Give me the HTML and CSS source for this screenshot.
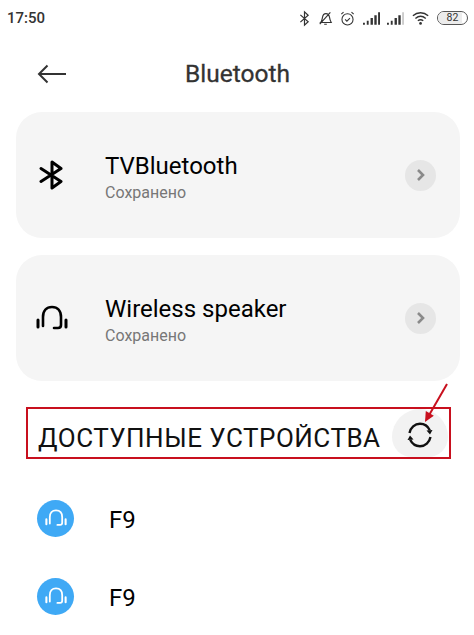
FILE: index.html
```html
<!DOCTYPE html>
<html lang="en">
<head>
    <meta charset="UTF-8">
    <meta name="viewport" content="width=device-width, initial-scale=1.0">
    <title>Bluetooth</title>
    <link rel="stylesheet" href="styles.css">
</head>
<body>
    <div class="screen">
        <div class="statusbar">
            <span class="time">17:50</span>
            <div class="status-icons">
                <svg width="11" height="17" viewBox="0 0 12 17"><path d="M1.500 4.500 10 12l-4 3.800V1.200L10 5 1.500 12.500" fill="none" stroke="#333" stroke-width="1.300"/></svg>
                <svg width="15" height="17" viewBox="0 0 17 17"><path d="M3 13c1.500-1.500 1.500-3 2-5.500C5.500 4.500 7.500 3 9 3c2 0 3.500 1.500 4 4 .3 2 .8 4 2 6zM7 15h3M2 15 14 1.500" fill="none" stroke="#333" stroke-width="1.300"/></svg>
                <svg width="15" height="17" viewBox="0 0 17 18"><circle cx="8.500" cy="10" r="6.300" fill="none" stroke="#333" stroke-width="1.200"/><path d="M5.800 10l2 2 3.500-3.500M1.500 4 4 1.800M15.500 4 13 1.800" fill="none" stroke="#333" stroke-width="1.200"/></svg>
                <svg class="signal" width="17" height="13" viewBox="0 0 18 13"><path d="M0 11h2v2H0zM4 9h2v4H4zM8 6h2.500v7H8zM12 3h2.500v10H12zM16 0h2v13h-2z" fill="#333"/></svg>
                <svg class="signal" width="17" height="13" viewBox="0 0 18 13"><path d="M0 11h2v2H0zM4 9h2v4H4zM8 6h2.500v7H8zM12 3h2.500v10H12z" fill="#333"/><path d="M16 0h2v13h-2z" fill="#ccc"/></svg>
                <svg width="18" height="16" viewBox="0 0 20 16"><path d="M1 5.500c5-4.500 12-4.500 17 0M3.800 8.500c3.500-3 8-3 11.500 0M6.500 11c2-1.500 4-1.500 6 0" fill="none" stroke="#333" stroke-width="1.500"/><circle cx="9.500" cy="14" r="1.500" fill="#333"/></svg>
                <div class="battery"><div class="battery-level"></div><span>82</span></div>
            </div>
        </div>

        <div class="header">
            <svg class="back" width="30" height="20" viewBox="0 0 30 20"><path d="M29 10H2M10.500 1.500 2 10l8.500 8.500" fill="none" stroke="#333" stroke-width="2"/></svg>
            <h1>Bluetooth</h1>
        </div>

        <div class="card">
            <svg class="card-icon" width="24" height="30" viewBox="0 0 26 30"><path d="M2 8.500 22 21.500 13 28V2l9 6.500L2 21.500" fill="none" stroke="#000" stroke-width="3" stroke-linejoin="round" stroke-linecap="round"/></svg>
            <div class="card-text">
                <div class="card-name">TVBluetooth</div>
                <div class="card-sub">Сохранено</div>
            </div>
            <div class="chevron"><svg width="10" height="14" viewBox="0 0 10 14"><path d="M2 2l5 5-5 5" fill="none" stroke="#8a8a8a" stroke-width="2.600"/></svg></div>
        </div>

        <div class="card">
            <svg class="card-icon" width="32" height="26" viewBox="0 0 32 26"><path d="M7 21V12C7 5.500 10.500 2 16 2s9 3.500 9 10v8c0 2-1 3-3 3h-4" fill="none" stroke="#000" stroke-width="2.600" stroke-linecap="round"/><path d="M2 15v7M30 15v7" stroke="#000" stroke-width="3" stroke-linecap="round"/></svg>
            <div class="card-text">
                <div class="card-name">Wireless speaker</div>
                <div class="card-sub">Сохранено</div>
            </div>
            <div class="chevron"><svg width="10" height="14" viewBox="0 0 10 14"><path d="M2 2l5 5-5 5" fill="none" stroke="#8a8a8a" stroke-width="2.600"/></svg></div>
        </div>

        <div class="section">
            <span class="section-title">ДОСТУПНЫЕ УСТРОЙСТВА</span>
            <div class="refresh">
                <svg width="26" height="26" viewBox="0 0 26 26"><path d="M2.500 11C3.500 5.800 7.800 1.800 13 1.800c4.500 0 8 2.600 9.800 6.400M23.500 15c-1 5.200-5.300 9.200-10.500 9.200-4.500 0-8-2.600-9.800-6.400" fill="none" stroke="#111" stroke-width="2.400"/><path d="M25.500 8 23 12.500 19.500 8.500zM.5 18 3 13.500 6.500 17.500z" fill="#111"/></svg>
            </div>
            <svg class="arrow" width="25" height="40" viewBox="0 0 25 40"><path d="M23 1 4 34" stroke="#c8101e" stroke-width="2" fill="none"/><path d="M1 39 1.800 28l8 4.700z" fill="#c8101e"/></svg>
        </div>

        <div class="device">
            <div class="device-icon"><svg width="22" height="18" viewBox="0 0 32 26"><path d="M7 21V12C7 5.500 10.500 2 16 2s9 3.500 9 10v8c0 2-1 3-3 3h-4" fill="none" stroke="#fff" stroke-width="2.600" stroke-linecap="round"/><path d="M2 15v7M30 15v7" stroke="#fff" stroke-width="3" stroke-linecap="round"/></svg></div>
            <span>F9</span>
        </div>
        <div class="device">
            <div class="device-icon"><svg width="22" height="18" viewBox="0 0 32 26"><path d="M7 21V12C7 5.500 10.500 2 16 2s9 3.500 9 10v8c0 2-1 3-3 3h-4" fill="none" stroke="#fff" stroke-width="2.600" stroke-linecap="round"/><path d="M2 15v7M30 15v7" stroke="#fff" stroke-width="3" stroke-linecap="round"/></svg></div>
            <span>F9</span>
        </div>
    </div>
</body>
</html>
```
FILE: styles.css
```css
body {
    margin: 0;
    background-color: #fff;
    font-family: Roboto, "Noto Sans", sans-serif;
    color: #000;
}
.screen {
    width: 474px;
    height: 635px;
    overflow: hidden;
}
.statusbar {
    display: flex;
    justify-content: space-between;
    align-items: center;
    height: 36px;
    padding: 0 6px 0 7px;
}
.time {
    font-size: 15px;
    font-weight: 500;
    color: #333;
}
.status-icons {
    display: flex;
    align-items: center;
    gap: 7.500px;
}
.signal {
    margin-top: 1px;
}
.battery {
    position: relative;
    width: 29px;
    height: 12px;
    border: 1px solid #555;
    border-radius: 7px;
    overflow: hidden;
    text-align: center;
    font-size: 10.500px;
    line-height: 12px;
    color: #333;
}
.battery span {
    position: relative;
}
.battery-level {
    position: absolute;
    left: 0;
    top: 0;
    bottom: 0;
    width: 82%;
    background-color: #ececec;
}
.header {
    display: flex;
    align-items: center;
    height: 76px;
    padding-left: 37px;
}
.header h1 {
    margin: 0 0 2px 0;
    padding-left: 118px;
    font-size: 24.500px;
    font-weight: 400;
    color: #333;
    -webkit-text-stroke: 0.3px #333;
}
.card {
    display: flex;
    align-items: center;
    height: 126px;
    margin: 0 14px 17px 16px;
    padding: 0 24px 0 0;
    background-color: #f5f5f5;
    border-radius: 26px;
}
.card-icon {
    flex: none;
    width: 72px;
    margin-right: 17px;
}
.card-text {
    flex: 1;
    padding-top: 3px;
}
.card-name {
    font-size: 24px;
    line-height: 30px;
}
.card-sub {
    margin-top: 2px;
    font-size: 16px;
    line-height: 20px;
    color: #777;
}
.chevron {
    display: flex;
    align-items: center;
    justify-content: center;
    width: 31px;
    height: 31px;
    border-radius: 50%;
    background-color: #e6e6e6;
}
.section {
    position: relative;
    display: flex;
    align-items: center;
    justify-content: space-between;
    box-sizing: border-box;
    height: 52px;
    margin: 26px 23px 20px 26px;
    padding: 9px 0 0 10px;
    border: 2px solid #c8101e;
}
.section-title {
    font-size: 26px;
    letter-spacing: 0.500px;
    color: #111;
}
.refresh {
    position: absolute;
    right: 1px;
    top: 0;
    display: flex;
    align-items: center;
    justify-content: center;
    box-sizing: border-box;
    width: 56px;
    height: 48px;
    padding-top: 4px;
    border-radius: 28px 28px 20px 20px;
    background-color: #f2f2f2;
}
.arrow {
    position: absolute;
    right: 0;
    top: -26px;
}
.device {
    display: flex;
    align-items: center;
    height: 78px;
    padding-left: 37px;
    font-size: 24px;
}
.device span {
    margin-left: 35px;
    padding-top: 3px;
}
.device-icon {
    display: flex;
    align-items: center;
    justify-content: center;
    width: 37px;
    height: 37px;
    border-radius: 50%;
    background-color: #3fa9f5;
}
```
